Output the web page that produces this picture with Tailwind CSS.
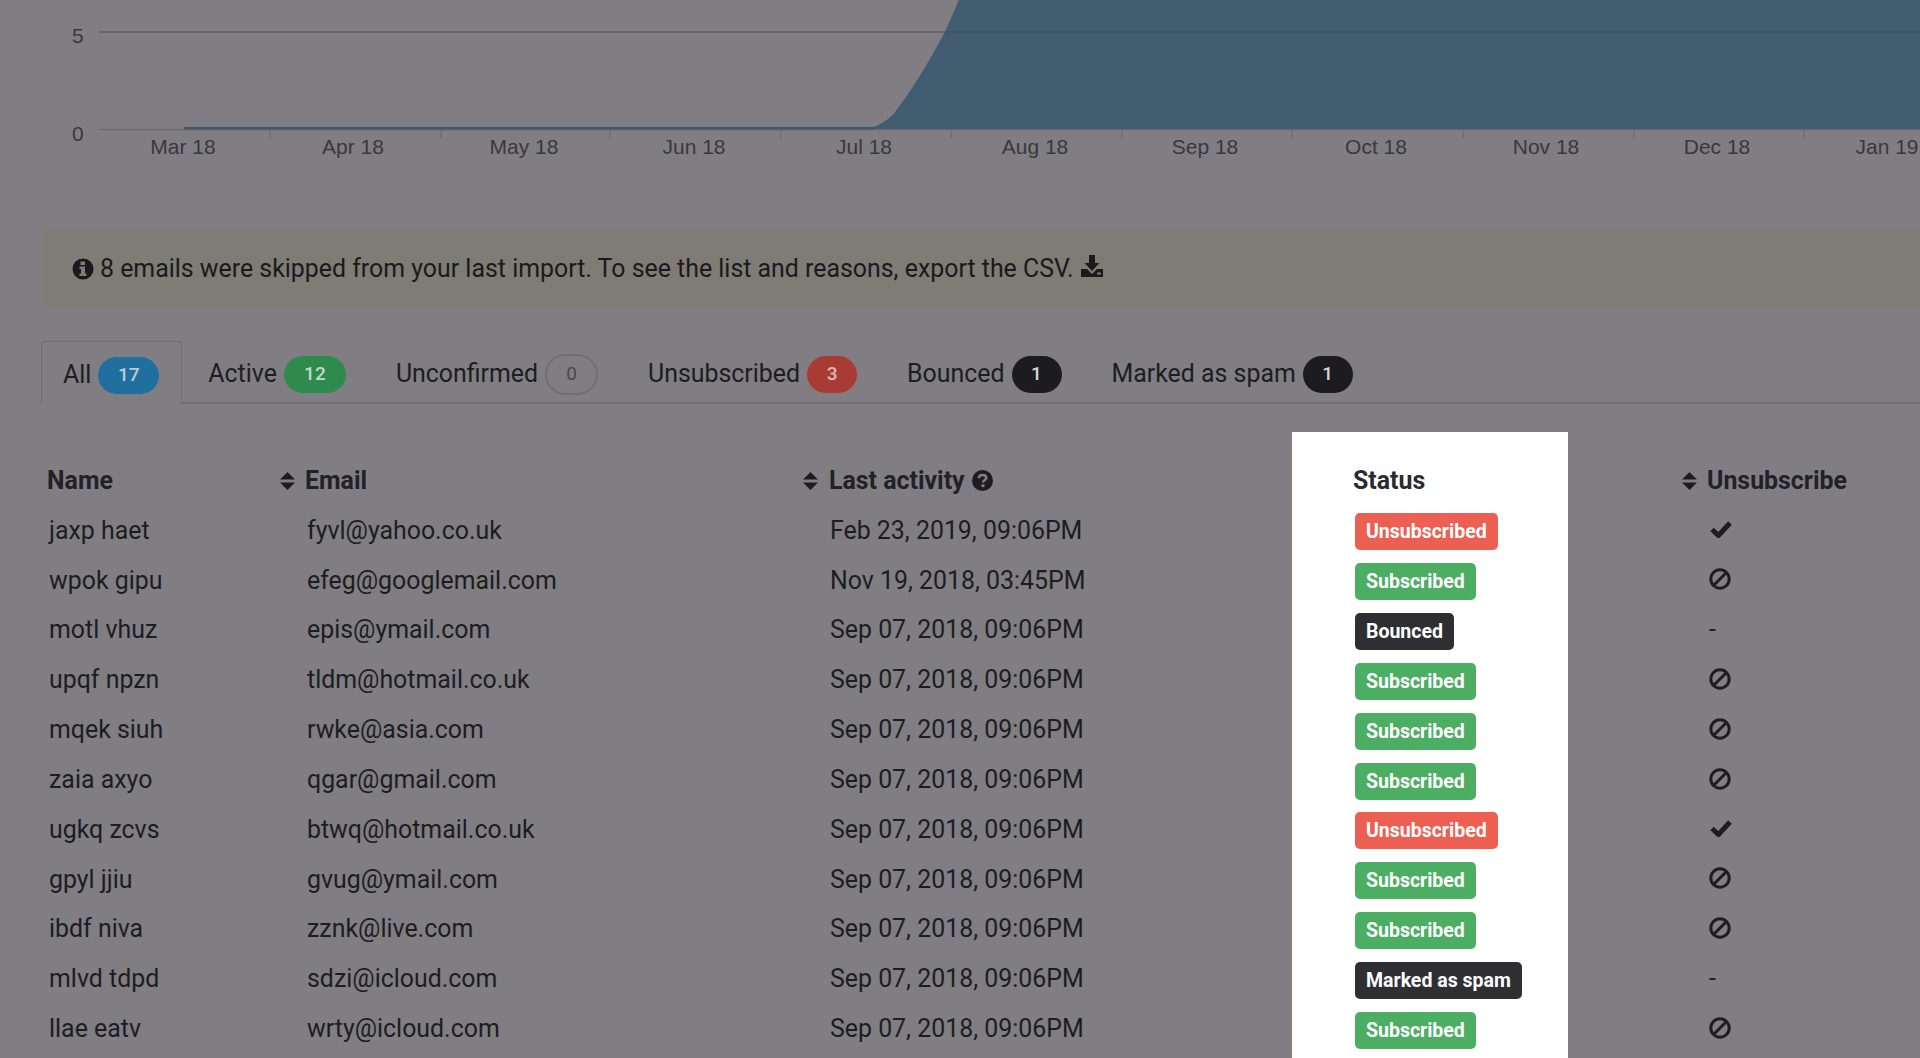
<!DOCTYPE html>
<html lang="en">
<head>
    <meta charset="UTF-8">
    <title>Subscribers</title>
    <script src="https://cdn.jsdelivr.net/npm/@tailwindcss/browser@4"></script>
</head>
<body class="bg-[#807e82] h-[1058px] overflow-hidden font-['Roboto',sans-serif] text-[#1d1d21] text-[24.9px]">

    <!-- Chart -->
    <div class="h-[230px]">
        <svg width="1920" height="230" viewBox="0 0 1920 230" class="block font-['Liberation_Sans',sans-serif] text-[21px] fill-[#39383d]">
            <line x1="99" y1="32" x2="1920" y2="32" stroke="#615f63" stroke-width="1.5"/>
            <line x1="99" y1="129.5" x2="1920" y2="129.5" stroke="#6b696d" stroke-width="1.5"/>
            <path d="M870 129C880 127 888 121 894 115C909 96 928 66 946 32L960 0H1920V129Z" fill="#425c70"/>
            <path d="M870 129C880 127 888 121 894 115C909 96 928 66 946 32L960 0" fill="none" stroke="#3d5c75" stroke-width="2"/>
            <line x1="946" y1="32" x2="1920" y2="32" stroke="#3c5264" stroke-width="1.5"/>
            <rect x="184" y="127" width="690" height="2.5" fill="#40596d"/>
            <g stroke="#666468" stroke-width="1">
                <line x1="270" y1="130" x2="270" y2="138"/>
                <line x1="441" y1="130" x2="441" y2="138"/>
                <line x1="610" y1="130" x2="610" y2="138"/>
                <line x1="781" y1="130" x2="781" y2="138"/>
                <line x1="951" y1="130" x2="951" y2="138"/>
                <line x1="1122" y1="130" x2="1122" y2="138"/>
                <line x1="1292" y1="130" x2="1292" y2="138"/>
                <line x1="1463" y1="130" x2="1463" y2="138"/>
                <line x1="1634" y1="130" x2="1634" y2="138"/>
                <line x1="1804" y1="130" x2="1804" y2="138"/>
            </g>
            <text x="72" y="43">5</text>
            <text x="72" y="141">0</text>
            <g text-anchor="middle">
                <text x="183" y="154">Mar 18</text>
                <text x="353" y="154">Apr 18</text>
                <text x="524" y="154">May 18</text>
                <text x="694" y="154">Jun 18</text>
                <text x="864" y="154">Jul 18</text>
                <text x="1035" y="154">Aug 18</text>
                <text x="1205" y="154">Sep 18</text>
                <text x="1376" y="154">Oct 18</text>
                <text x="1546" y="154">Nov 18</text>
                <text x="1717" y="154">Dec 18</text>
                <text x="1887" y="154">Jan 19</text>
            </g>
        </svg>
    </div>

    <!-- Import warning -->
    <div class="ml-[45px] h-[76px] pl-[27px] pt-[1px] flex items-center bg-[#7e7c74] shadow-[0_0_6px_#7e7c74] text-[#1a1a1c]">
        <svg width="22" height="22" viewBox="0 0 22 22" class="mr-[6px] shrink-0">
            <circle cx="11" cy="11" r="10.5" fill="#1a1a1c"/>
            <rect x="8.5" y="3.5" width="4.5" height="3.5" fill="#7e7c74"/>
            <path d="M7.5 8.5H13V15.5H14.5V18H7.5V15.5H9V11H7.5Z" fill="#7e7c74"/>
        </svg>
        <span>8 emails were skipped from your last import. To see the list and reasons, export the CSV.</span>
        <svg width="24" height="23" viewBox="0 0 24 23" class="ml-[6px] shrink-0 -mt-[4px]">
            <path d="M9 0H15V8H19.5L12 16L4.5 8H9Z" fill="#1a1a1c"/>
            <path d="M1 14H7L12 19L17 14H23V22H1Z" fill="#1a1a1c"/>
            <rect x="17" y="17.5" width="4" height="2" fill="#7e7c74"/>
        </svg>
    </div>

    <!-- Tabs -->
    <div class="mt-[35px] ml-[41px] h-[63px] flex gap-[2px] border-b-2 border-[#6f6d71]">
        <div class="h-[63px] pl-[21px] pr-[22px] pt-[3px] flex items-center gap-[7px] border border-b-0 border-[#6f6d71] rounded-t-[4px] bg-[#807e82]">
            All <span class="mt-[1px] w-[61px] h-[37px] rounded-full bg-[#20709f] flex items-center justify-center text-[19px] font-medium text-[#bccad3]">17</span>
        </div>
        <div class="px-[24px] pt-[5px] flex items-center gap-[7px]">
            Active <span class="mt-[1px] w-[62px] h-[37px] rounded-full bg-[#2f8a4e] flex items-center justify-center text-[19px] font-medium text-[#c3d8c9]">12</span>
        </div>
        <div class="px-[24px] pt-[5px] flex items-center gap-[7px]">
            Unconfirmed <span class="mt-[1px] w-[53px] h-[41px] rounded-full border-2 border-[#716f73] flex items-center justify-center text-[19px] text-[#49484c]">0</span>
        </div>
        <div class="px-[24px] pt-[5px] flex items-center gap-[7px]">
            Unsubscribed <span class="mt-[1px] w-[50px] h-[37px] rounded-full bg-[#a83c34] flex items-center justify-center text-[19px] font-medium text-[#dcbdb9]">3</span>
        </div>
        <div class="px-[24px] pt-[5px] flex items-center gap-[7px]">
            Bounced <span class="mt-[1px] w-[50px] h-[37px] rounded-full bg-[#1c1c20] flex items-center justify-center text-[19px] font-medium text-[#d6d6d7]">1</span>
        </div>
        <div class="px-[24px] pt-[5px] flex items-center gap-[7px]">
            Marked as spam <span class="mt-[1px] w-[50px] h-[37px] rounded-full bg-[#1c1c20] flex items-center justify-center text-[19px] font-medium text-[#d6d6d7]">1</span>
        </div>
    </div>

    <!-- Subscribers table -->
    <div id="subscribers" class="mt-[28px] grid grid-cols-[280px_523px_489px_276px_352px] grid-rows-[73px] auto-rows-[49.85px]">
        <div class="pl-[47px] pt-[30px] font-bold text-[#222226]">Name</div>
        <div class="pt-[30px] flex gap-[10px] font-bold text-[#222226]">
            <svg width="15" height="18" viewBox="0 0 15 18" class="mt-[10px] shrink-0"><path d="M7.5 0L15 7.5H0ZM0 10.5H15L7.5 18Z" fill="#1d1d21"/></svg>
            <span class="h-[28px]">Email</span>
        </div>
        <div class="pt-[30px] flex gap-[11px] font-bold text-[#222226]">
            <svg width="15" height="18" viewBox="0 0 15 18" class="mt-[10px] shrink-0"><path d="M7.5 0L15 7.5H0ZM0 10.5H15L7.5 18Z" fill="#1d1d21"/></svg>
            <span class="h-[28px]">Last activity</span>
            <svg width="21" height="21" viewBox="0 0 21 21" class="mt-[8px] -ml-[4px] shrink-0">
                <circle cx="10.5" cy="10.5" r="10.5" fill="#1d1d21"/>
                <path d="M6.8 8.2C7 6 8.6 5 10.5 5C12.6 5 14.2 6.2 14.2 8C14.2 10.3 11 10.3 11 12.5" fill="none" stroke="#807e82" stroke-width="2.6"/>
                <rect x="9.5" y="14.3" width="3" height="2.8" fill="#807e82"/>
            </svg>
        </div>
        <div class="pl-[61px] pt-[30px] bg-white font-bold text-[#2b2b2f]">Status</div>
        <div class="pl-[114px] pt-[30px] flex gap-[10px] font-bold text-[#222226]">
            <svg width="15" height="18" viewBox="0 0 15 18" class="mt-[10px] shrink-0"><path d="M7.5 0L15 7.5H0ZM0 10.5H15L7.5 18Z" fill="#1d1d21"/></svg>
            <span class="h-[28px]">Unsubscribe</span>
        </div>
    </div>

    <script>
        const subscribers = [
            ['jaxp haet', 'fyvl@yahoo.co.uk', 'Feb 23, 2019, 09:06PM', 'Unsubscribed'],
            ['wpok gipu', 'efeg@googlemail.com', 'Nov 19, 2018, 03:45PM', 'Subscribed'],
            ['motl vhuz', 'epis@ymail.com', 'Sep 07, 2018, 09:06PM', 'Bounced'],
            ['upqf npzn', 'tldm@hotmail.co.uk', 'Sep 07, 2018, 09:06PM', 'Subscribed'],
            ['mqek siuh', 'rwke@asia.com', 'Sep 07, 2018, 09:06PM', 'Subscribed'],
            ['zaia axyo', 'qgar@gmail.com', 'Sep 07, 2018, 09:06PM', 'Subscribed'],
            ['ugkq zcvs', 'btwq@hotmail.co.uk', 'Sep 07, 2018, 09:06PM', 'Unsubscribed'],
            ['gpyl jjiu', 'gvug@ymail.com', 'Sep 07, 2018, 09:06PM', 'Subscribed'],
            ['ibdf niva', 'zznk@live.com', 'Sep 07, 2018, 09:06PM', 'Subscribed'],
            ['mlvd tdpd', 'sdzi@icloud.com', 'Sep 07, 2018, 09:06PM', 'Marked as spam'],
            ['llae eatv', 'wrty@icloud.com', 'Sep 07, 2018, 09:06PM', 'Subscribed'],
        ];

        const badgeColors = {
            'Unsubscribed': 'bg-[#ec5f52]',
            'Subscribed': 'bg-[#4bae62]',
            'Bounced': 'bg-[#2f2e33]',
            'Marked as spam': 'bg-[#2f2e33]',
        };

        const checkIcon = `<svg width="22" height="18" viewBox="0 0 22 18" class="ml-[1px] -mt-[2px]"><path d="M2 9.5L8.5 15.500L20 3" fill="none" stroke="#1d1d21" stroke-width="5"/></svg>`;
        const banIcon = `<svg width="22" height="22" viewBox="0 0 22 22" class="-mt-[1px]"><circle cx="11" cy="11" r="9.2" fill="none" stroke="#1d1d21" stroke-width="3"/><line x1="5" y1="17" x2="17" y2="5" stroke="#1d1d21" stroke-width="3"/></svg>`;

        function actionFor(status) {
            if (status === 'Unsubscribed') return checkIcon;
            if (status === 'Subscribed') return banIcon;
            return '-';
        }

        let html = '';
        for (const [name, email, activity, status] of subscribers) {
            html += `
                <div class="pl-[49px] pt-[1px] flex items-center">${name}</div>
                <div class="pl-[27px] pt-[1px] flex items-center">${email}</div>
                <div class="pl-[27px] pt-[1px] flex items-center">${activity}</div>
                <div class="pl-[63px] pt-[4px] flex items-center bg-white">
                    <span class="h-[37px] px-[11px] flex items-center rounded-[5px] text-[19.5px] font-bold text-white ${badgeColors[status]}">${status}</span>
                </div>
                <div class="pl-[141px] flex items-center">${actionFor(status)}</div>
            `;
        }
        // white status column runs on past the last row
        html += `<div class="col-start-4 bg-white"></div>`;
        document.getElementById('subscribers').insertAdjacentHTML('beforeend', html);
    </script>
</body>
</html>
